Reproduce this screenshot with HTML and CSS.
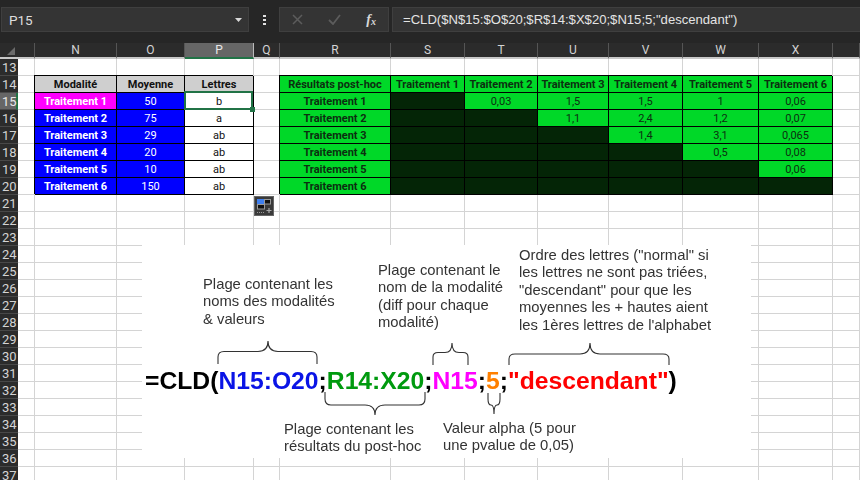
FILE: index.html
```html
<!DOCTYPE html>
<html lang="fr">
<head>
    <meta charset="UTF-8">
    <title>CLD</title>
    <link rel="stylesheet" href="styles.css">
</head>
<body>
    <!-- Formula bar -->
    <div class="topbar">
        <div class="namebox">
            <span>P15</span>
            <svg width="7" height="4" viewBox="0 0 7 4"><path d="M0 0H7L3.500 4Z" fill="#d8d8d8"/></svg>
        </div>
        <div class="dots"><i></i><i></i><i></i></div>
        <div class="fxbox">
            <svg width="11" height="11" viewBox="0 0 11 11"><path d="M1 1L10 10M10 1L1 10" stroke="#5c5c5c" stroke-width="1.500" fill="none"/></svg>
            <svg width="13" height="11" viewBox="0 0 13 11"><path d="M1 6L5 10L12 1" stroke="#5c5c5c" stroke-width="1.800" fill="none"/></svg>
            <span class="fx">f<sub>x</sub></span>
        </div>
        <div class="formula">=CLD($N$15:$O$20;$R$14:$X$20;$N15;5;"descendant")</div>
    </div>

    <!-- Sheet -->
    <table class="sheet">
        <colgroup>
            <col class="c18"><col class="c16"><col class="c82"><col class="c68"><col class="c69"><col class="c26"><col class="c111">
            <col class="c74"><col class="c73"><col class="c71"><col class="c74"><col class="c76"><col class="c74"><col class="c27">
        </colgroup>
        <tr class="cols">
            <th colspan="2" class="corner"><svg width="8" height="8" viewBox="0 0 8 8"><path d="M8 0V8H0Z" fill="#6a6a6a"/></svg></th>
            <th>N</th><th>O</th><th class="active">P</th><th>Q</th><th>R</th><th>S</th><th>T</th><th>U</th><th>V</th><th>W</th><th>X</th><th></th>
        </tr>
        <tr><th>13</th><td></td><td></td><td></td><td></td><td></td><td></td><td></td><td></td><td></td><td></td><td></td><td></td><td></td></tr>
        <tr>
            <th>14</th><td></td>
            <td class="box head">Modalité</td><td class="box head">Moyenne</td><td class="box head">Lettres</td><td></td>
            <td class="box green b">Résultats post-hoc</td><td class="box green b">Traitement 1</td><td class="box green b">Traitement 2</td><td class="box green b">Traitement 3</td><td class="box green b">Traitement 4</td><td class="box green b">Traitement 5</td><td class="box green b">Traitement 6</td><td></td>
        </tr>
        <tr>
            <th class="active">15</th><td></td>
            <td class="box pink">Traitement 1</td><td class="box blue">50</td><td class="box letter sel-cell">b<span class="sel"></span><span class="handle"></span></td><td></td>
            <td class="box green b">Traitement 1</td><td class="box dark"></td><td class="box green">0,03</td><td class="box green">1,5</td><td class="box green">1,5</td><td class="box green">1</td><td class="box green">0,06</td><td></td>
        </tr>
        <tr>
            <th>16</th><td></td>
            <td class="box blue b">Traitement 2</td><td class="box blue">75</td><td class="box letter">a</td><td></td>
            <td class="box green b">Traitement 2</td><td class="box dark"></td><td class="box dark"></td><td class="box green">1,1</td><td class="box green">2,4</td><td class="box green">1,2</td><td class="box green">0,07</td><td></td>
        </tr>
        <tr>
            <th>17</th><td></td>
            <td class="box blue b">Traitement 3</td><td class="box blue">29</td><td class="box letter">ab</td><td></td>
            <td class="box green b">Traitement 3</td><td class="box dark"></td><td class="box dark"></td><td class="box dark"></td><td class="box green">1,4</td><td class="box green">3,1</td><td class="box green">0,065</td><td></td>
        </tr>
        <tr>
            <th>18</th><td></td>
            <td class="box blue b">Traitement 4</td><td class="box blue">20</td><td class="box letter">ab</td><td></td>
            <td class="box green b">Traitement 4</td><td class="box dark"></td><td class="box dark"></td><td class="box dark"></td><td class="box dark"></td><td class="box green">0,5</td><td class="box green">0,08</td><td></td>
        </tr>
        <tr>
            <th>19</th><td></td>
            <td class="box blue b">Traitement 5</td><td class="box blue">10</td><td class="box letter">ab</td><td></td>
            <td class="box green b">Traitement 5</td><td class="box dark"></td><td class="box dark"></td><td class="box dark"></td><td class="box dark"></td><td class="box dark"></td><td class="box green">0,06</td><td></td>
        </tr>
        <tr>
            <th>20</th><td></td>
            <td class="box blue b">Traitement 6</td><td class="box blue">150</td><td class="box letter">ab</td><td></td>
            <td class="box green b">Traitement 6</td><td class="box dark"></td><td class="box dark"></td><td class="box dark"></td><td class="box dark"></td><td class="box dark"></td><td class="box dark"></td><td></td>
        </tr>
        <tr><th>21</th><td></td><td></td><td></td><td></td><td></td><td></td><td></td><td></td><td></td><td></td><td></td><td></td><td></td></tr>
        <tr><th>22</th><td></td><td></td><td></td><td></td><td></td><td></td><td></td><td></td><td></td><td></td><td></td><td></td><td></td></tr>
        <tr><th>23</th><td></td><td></td><td></td><td></td><td></td><td></td><td></td><td></td><td></td><td></td><td></td><td></td><td></td></tr>
        <tr><th>24</th><td></td><td></td><td></td><td></td><td></td><td></td><td></td><td></td><td></td><td></td><td></td><td></td><td></td></tr>
        <tr><th>25</th><td></td><td></td><td></td><td></td><td></td><td></td><td></td><td></td><td></td><td></td><td></td><td></td><td></td></tr>
        <tr><th>26</th><td></td><td></td><td></td><td></td><td></td><td></td><td></td><td></td><td></td><td></td><td></td><td></td><td></td></tr>
        <tr><th>27</th><td></td><td></td><td></td><td></td><td></td><td></td><td></td><td></td><td></td><td></td><td></td><td></td><td></td></tr>
        <tr><th>28</th><td></td><td></td><td></td><td></td><td></td><td></td><td></td><td></td><td></td><td></td><td></td><td></td><td></td></tr>
        <tr><th>29</th><td></td><td></td><td></td><td></td><td></td><td></td><td></td><td></td><td></td><td></td><td></td><td></td><td></td></tr>
        <tr><th>30</th><td></td><td></td><td></td><td></td><td></td><td></td><td></td><td></td><td></td><td></td><td></td><td></td><td></td></tr>
        <tr><th>31</th><td></td><td></td><td></td><td></td><td></td><td></td><td></td><td></td><td></td><td></td><td></td><td></td><td></td></tr>
        <tr><th>32</th><td></td><td></td><td></td><td></td><td></td><td></td><td></td><td></td><td></td><td></td><td></td><td></td><td></td></tr>
        <tr><th>33</th><td></td><td></td><td></td><td></td><td></td><td></td><td></td><td></td><td></td><td></td><td></td><td></td><td></td></tr>
        <tr><th>34</th><td></td><td></td><td></td><td></td><td></td><td></td><td></td><td></td><td></td><td></td><td></td><td></td><td></td></tr>
        <tr><th>35</th><td></td><td></td><td></td><td></td><td></td><td></td><td></td><td></td><td></td><td></td><td></td><td></td><td></td></tr>
        <tr><th>36</th><td></td><td></td><td></td><td></td><td></td><td></td><td></td><td></td><td></td><td></td><td></td><td></td><td></td></tr>
        <tr><th>37</th><td></td><td></td><td></td><td></td><td></td><td></td><td></td><td></td><td></td><td></td><td></td><td></td><td></td></tr>
    </table>

    <!-- Quick analysis button -->
    <div class="quick">
        <svg width="18" height="18" viewBox="0 0 18 18">
            <rect x="2" y="2" width="8" height="5" fill="#3f7fef"/>
            <rect x="9.500" y="2.500" width="6" height="4.500" fill="#111" stroke="#999"/>
            <rect x="2.500" y="7.500" width="7" height="4.500" fill="#111" stroke="#999"/>
            <path d="M2 15.500H10" stroke="#999" stroke-dasharray="1 1"/>
            <path d="M11.500 13.500H16.500M14 11V16" stroke="#aaa" stroke-width="1.200"/>
        </svg>
    </div>

    <!-- Picture pasted over the sheet -->
    <div class="note-image">
        <svg class="braces" width="609" height="213" viewBox="142 245 609 213">
            <g fill="none" stroke="#333" stroke-width="1.100">
                <path d="M218 364V357Q218 351.500 224 351.500H258Q268 351.500 268 341Q268 351.500 278 351.500H311Q317 351.500 317 357V364"/>
                <path d="M433 365V357Q433 352.500 438 352.500H445Q452 352.500 452 343Q452 352.500 459 352.500H463Q468 352.500 468 357V365"/>
                <path d="M509 365V359Q509 354 515 354H580Q590 354 590 343Q590 354 600 354H663Q669 354 669 359V365"/>
                <path d="M325 392V399Q325 405 331 405H365Q375 405 375 415Q375 405 385 405H419Q425 405 425 399V392"/>
                <path d="M488 393V399Q488 405 491 405Q494 405 494 414Q494 405 497 405Q500 405 500 399V393"/>
            </g>
        </svg>
        <p class="note n1">Plage contenant les<br>noms des modalités<br>&amp; valeurs</p>
        <p class="note n2">Plage contenant le<br>nom de la modalité<br>(diff pour chaque<br>modalité)</p>
        <p class="note n3">Ordre des lettres ("normal" si<br>les lettres ne sont pas triées,<br>"descendant" pour que les<br>moyennes les + hautes aient<br>les 1ères lettres de l'alphabet</p>
        <p class="note n4">Plage contenant les<br>résultats du post-hoc</p>
        <p class="note n5">Valeur alpha (5 pour<br>une pvalue de 0,05)</p>
        <p class="bigformula">=CLD(<span class="f-blue">N15:O20</span>;<span class="f-green">R14:X20</span>;<span class="f-pink">N15</span>;<span class="f-orange">5</span>;<span class="f-red">"descendant"</span>)</p>
    </div>
</body>
</html>
```

FILE: styles.css
```css
* {
    box-sizing: border-box;
}

html, body {
    margin: 0;
    height: 100%;
    overflow: hidden;
}

body {
    width: 860px;
    height: 480px;
    position: relative;
    background-color: #ffffff;
    font-family: "Roboto", "Liberation Sans", sans-serif;
}

/* formula bar */
.topbar {
    height: 43px;
    padding: 7px 0 11px 1px;
    display: flex;
    background-color: #262626;
}

.namebox {
    width: 248px;
    padding: 0 6px 0 7px;
    display: flex;
    align-items: center;
    justify-content: space-between;
    background-color: #343434;
    border: 1px solid #3f3f3f;
    color: #dddddd;
    font-size: 13.500px;
}

.dots {
    width: 30px;
    display: flex;
    flex-direction: column;
    align-items: center;
    justify-content: center;
    gap: 2px;
}

.dots i {
    width: 3px;
    height: 2px;
    background-color: #e0e0e0;
}

.fxbox {
    width: 110px;
    padding: 0 12px;
    display: flex;
    align-items: center;
    justify-content: space-between;
    background-color: #343434;
    border: 1px solid #3f3f3f;
}

.fx {
    color: #d8d8d8;
    font-family: "Liberation Serif", serif;
    font-style: italic;
    font-weight: bold;
    font-size: 14px;
    line-height: 14px;
}

.fx sub {
    font-size: 10px;
    vertical-align: -1px;
    line-height: 0;
}

.formula {
    flex: 1;
    margin-left: 3px;
    padding-left: 10px;
    display: flex;
    align-items: center;
    background-color: #343434;
    border: 1px solid #3f3f3f;
    border-right: 0;
    color: #e4e4e4;
    font-family: "Liberation Sans", sans-serif;
    font-size: 13.100px;
}

/* sheet */
.sheet {
    width: 860px;
    table-layout: fixed;
    border-collapse: separate;
    border-spacing: 0;
    font-size: 11px;
}

.c18 { width: 18px; }
.c16 { width: 17px; }
.c82 { width: 82px; }
.c68 { width: 68px; }
.c69 { width: 69px; }
.c26 { width: 26px; }
.c111 { width: 111px; }
.c74 { width: 74px; }
.c73 { width: 73px; }
.c71 { width: 71px; }
.c76 { width: 76px; }
.c27 { width: 27px; }

.sheet td, .sheet th {
    height: 17px;
    padding: 2px 0 0;
    overflow: visible;
    text-align: center;
    white-space: nowrap;
    line-height: 14px;
}

.sheet td {
    border-right: 1px solid #d4d4d4;
    border-bottom: 1px solid #d4d4d4;
    color: #111111;
}

.sheet th {
    background-color: #2b2b2b;
    border-bottom: 1px solid #484848;
    color: #d4d4d4;
    font-size: 13px;
    font-weight: normal;
    text-align: left;
    padding-left: 2px;
}

.sheet th.active {
    background-color: #666666;
    border-right: 2px solid #217346;
    color: #e8e8e8;
}

.sheet .cols th {
    height: 16px;
    line-height: 14px;
    padding: 0;
    background-color: #2b2b2b;
    border-right: 1px solid #555555;
    border-bottom: 2px solid #c8c8c8;
    font-size: 12px;
    text-align: center;
}

.sheet .cols th.active {
    background-color: #666666;
    border-right: 1px solid #bbbbbb;
    border-bottom: 2px solid #217346;
}

.sheet .cols .corner {
    padding-left: 7px;
    text-align: left;
    line-height: 0;
}

.cols .corner svg {
    margin-top: 2px;
}

/* data blocks */
.sheet td.box {
    border-right-color: #000000;
    border-bottom-color: #000000;
    box-shadow: -1px -1px 0 #000000;
}

.b, .head, .pink {
    font-weight: bold;
}

.head {
    background-color: #cfcfcf;
}

.pink {
    background-color: #ff00ff;
}

.sheet td.pink, .sheet td.blue {
    color: #ffffff;
}

.blue {
    background-color: #0000ff;
}

.green {
    background-color: #00d828;
}

.sheet td.green {
    color: #0c2f10;
}

.dark {
    background-color: #042506;
}

.sel-cell {
    position: relative;
}

.sel {
    position: absolute;
    left: -1px;
    top: -2px;
    right: 0;
    bottom: -1px;
    border: 2px solid #217346;
}

.handle {
    position: absolute;
    right: -2px;
    bottom: -3px;
    width: 5px;
    height: 5px;
    background-color: #217346;
}

.quick {
    position: absolute;
    left: 254px;
    top: 196px;
    width: 20px;
    height: 20px;
    background-color: #3a3a3a;
    border: 1px solid #666666;
}

.quick svg {
    display: block;
}

/* pasted picture */
.note-image {
    position: absolute;
    left: 142px;
    top: 245px;
    width: 609px;
    height: 213px;
    background-color: #ffffff;
    font-family: "Liberation Sans", sans-serif;
    filter: blur(0.3px);
}

.braces {
    position: absolute;
    left: 0;
    top: 0;
}

.note {
    position: absolute;
    margin: 0;
    color: #333333;
    font-size: 14.800px;
    line-height: 17.400px;
    white-space: nowrap;
}

.n1 { left: 61px; top: 31px; }
.n2 { left: 236px; top: 17px; }
.n3 { left: 377px; top: 2px; }
.n4 { left: 142px; top: 176px; }
.n5 { left: 301px; top: 175px; }

.bigformula {
    position: absolute;
    left: 3px;
    top: 122px;
    margin: 0;
    color: #000000;
    font-size: 24.700px;
    font-weight: bold;
    line-height: 28px;
    white-space: nowrap;
}

.f-blue { color: #0a14e6; }
.f-green { color: #009a0f; }
.f-pink { color: #ff00ff; }
.f-orange { color: #ff8000; }
.f-red { color: #ff0000; }
```
